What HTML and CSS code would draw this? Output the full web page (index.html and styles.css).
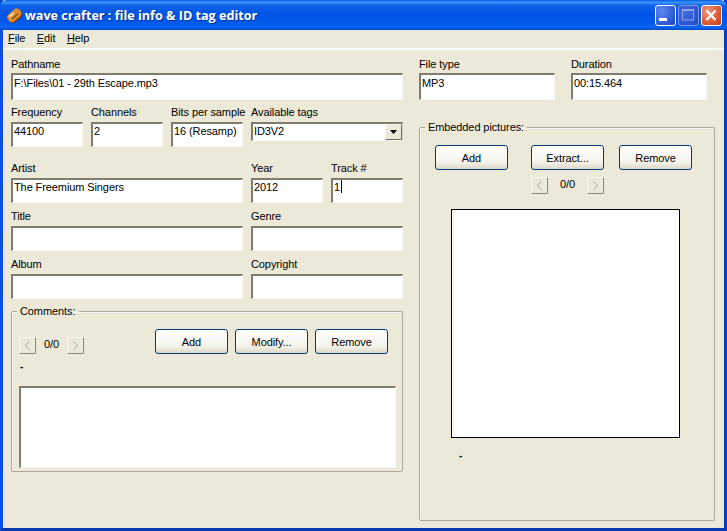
FILE: index.html
```html
<!DOCTYPE html>
<html lang="en">
<head>
<meta charset="utf-8">
<title>wave crafter : file info &amp; ID tag editor</title>
<link rel="stylesheet" href="styles.css">
</head>
<body>
<div class="window">
  <header class="titlebar">
    <svg class="app-icon" width="18" height="18" viewBox="0 0 18 18">
      <g transform="rotate(-42 9 10)">
        <rect x="1.5" y="5.5" width="15" height="9.5" rx="4" fill="#7a3f12"/>
        <rect x="1.5" y="4.5" width="15" height="9" rx="4" fill="#e08a34"/>
        <rect x="4" y="6" width="6" height="2" fill="#ffd9a0"/>
        <rect x="5" y="9.5" width="8" height="1.5" fill="#94501a"/>
      </g>
    </svg>
    <span class="title-text">wave crafter : file info &amp; ID tag editor</span>
    <div class="win-btns">
      <div class="win-btn min"><svg width="21" height="21" viewBox="0 0 21 21"><rect x="4" y="13" width="8" height="3" fill="#fff"/></svg></div>
      <div class="win-btn max"><svg width="21" height="21" viewBox="0 0 21 21"><rect x="4.5" y="5" width="11" height="10" fill="none" stroke="#8fa6e0" stroke-width="1"/><rect x="4" y="4" width="12" height="2" fill="#8fa6e0"/></svg></div>
      <div class="win-btn close"><svg width="21" height="21" viewBox="0 0 21 21"><path d="M5.5 5.5l9 9.5M14.5 5.5l-9 9.5" stroke="#fff" stroke-width="2.2" fill="none"/></svg></div>
    </div>
  </header>
  <nav class="menubar">
    <span class="menu-item"><u>F</u>ile</span>
    <span class="menu-item"><u>E</u>dit</span>
    <span class="menu-item"><u>H</u>elp</span>
  </nav>
  <main class="client">
    <section class="col-left">
      <div class="field f-path"><label class="lbl">Pathname</label><div class="box tall">F:\Files\01 - 29th Escape.mp3</div></div>
      <div class="row r-tech">
        <div class="field w72"><label class="lbl">Frequency</label><div class="box">44100</div></div>
        <div class="field w72"><label class="lbl">Channels</label><div class="box">2</div></div>
        <div class="field w72"><label class="lbl">Bits per sample</label><div class="box">16 (Resamp)</div></div>
        <div class="field w152"><label class="lbl">Available tags</label>
          <div class="box combo"><span>ID3V2</span><span class="combo-btn"><svg width="8" height="5" viewBox="0 0 8 5"><path d="M0 0h7L3.5 4z" fill="#000"/></svg></span></div>
        </div>
      </div>
      <div class="row r-meta">
        <div class="field w232"><label class="lbl">Artist</label><div class="box">The Freemium Singers</div></div>
        <div class="field w72"><label class="lbl">Year</label><div class="box">2012</div></div>
        <div class="field w72"><label class="lbl">Track #</label><div class="box">1<span class="caret"></span></div></div>
      </div>
      <div class="row r-meta">
        <div class="field w232"><label class="lbl">Title</label><div class="box"></div></div>
        <div class="field w152"><label class="lbl">Genre</label><div class="box"></div></div>
      </div>
      <div class="row r-meta">
        <div class="field w232"><label class="lbl">Album</label><div class="box"></div></div>
        <div class="field w152"><label class="lbl">Copyright</label><div class="box"></div></div>
      </div>
      <fieldset class="group comments">
        <legend class="legend">Comments:</legend>
        <div class="comments-top">
          <div class="pager">
            <span class="spin"><svg width="7" height="11" viewBox="0 0 7 11"><path d="M5.5 1L1.5 5.5 5.5 10" fill="none" stroke="#aca899"/></svg></span>
            <span class="count">0/0</span>
            <span class="spin"><svg width="7" height="11" viewBox="0 0 7 11"><path d="M1.5 1L5.5 5.5 1.5 10" fill="none" stroke="#aca899"/></svg></span>
          </div>
          <div class="btns">
            <button class="btn">Add</button>
            <button class="btn">Modify...</button>
            <button class="btn">Remove</button>
          </div>
        </div>
        <div class="dash">-</div>
        <div class="box memo"></div>
      </fieldset>
    </section>
    <section class="col-right">
      <div class="row r-file">
        <div class="field w136"><label class="lbl">File type</label><div class="box tall">MP3</div></div>
        <div class="field w136"><label class="lbl">Duration</label><div class="box tall">00:15.464</div></div>
      </div>
      <fieldset class="group pictures">
        <legend class="legend">Embedded pictures:</legend>
        <div class="pic-btns">
          <button class="btn">Add</button>
          <button class="btn">Extract...</button>
          <button class="btn">Remove</button>
        </div>
        <div class="pager pic-pager">
          <span class="spin"><svg width="7" height="11" viewBox="0 0 7 11"><path d="M5.5 1L1.5 5.5 5.5 10" fill="none" stroke="#aca899"/></svg></span>
          <span class="count">0/0</span>
          <span class="spin"><svg width="7" height="11" viewBox="0 0 7 11"><path d="M1.5 1L5.5 5.5 1.5 10" fill="none" stroke="#aca899"/></svg></span>
        </div>
        <div class="picture"></div>
        <div class="dash pic-dash">-</div>
      </fieldset>
    </section>
  </main>
</div>
</body>
</html>
```
FILE: styles.css
```css
* { box-sizing: border-box; }
html, body { margin: 0; padding: 0; height: 100%; }
body { width: 727px; height: 531px; overflow: hidden; font-family: "Liberation Sans", Arial, sans-serif; font-size: 11px; letter-spacing: -0.1px; color: #000; }
.window { width: 727px; height: 531px; display: flex; flex-direction: column; background: #ece9d8; border-left: 3px solid #0a50dc; border-right: 3px solid #0a3cc0; border-bottom: 3px solid #0a3ab0; }
.titlebar { margin: 0 -3px; height: 30px; flex: none; display: flex; align-items: center; padding: 0 5px 0 6px; border-radius: 7px 7px 0 0;
  background: linear-gradient(180deg, #0a5ae0 0%, #3a93ff 8%, #0f63ea 18%, #0054e3 45%, #0058ea 75%, #0a66f2 90%, #0048c8 100%); }
.app-icon { flex: none; margin-right: 1px; }
.title-text { font-family: "Open Sans", sans-serif; font-weight: 700; font-size: 12.6px; letter-spacing: 0; color: #fff; text-shadow: 1px 1px 0 #0f2f9a; white-space: nowrap; flex: 1; padding-top: 1px; }
.win-btns { display: flex; gap: 2px; }
.win-btn { width: 21px; height: 21px; border: 1px solid #fff; border-radius: 3px; display: block; }
.win-btn svg { display: block; margin: -1px; }
.min { background: radial-gradient(circle at 30% 30%, #5f8bf0, #2a55d6 70%, #1c3fb8); }
.max { background: radial-gradient(circle at 30% 30%, #3f6be0, #2a55d0 70%, #2447bc); border-color: #7d97e0; }
.close { background: radial-gradient(circle at 30% 30%, #ec9a80, #dd5a34 60%, #bf3a1a); }
.menubar { height: 19px; flex: none; display: flex; align-items: center; gap: 11.5px; padding: 0 0 2px 5px; border-bottom: 1px solid #fff; box-shadow: 0 1px 0 #f8f6ee; }
.client { flex: 1; display: flex; padding: 9px 0 7px 8px; gap: 16px; min-height: 0; }
.col-left { width: 392px; flex: none; display: flex; flex-direction: column; }
.col-right { width: 296px; flex: none; display: flex; flex-direction: column; }
.row { display: flex; gap: 8px; }
.field { display: flex; flex-direction: column; }
.f-path { height: 42px; }
.r-tech { margin-top: 6px; height: 41px; }
.r-meta { margin-top: 7px; height: 41px; }
.r-tech + .r-meta { margin-top: 15px; }
.r-file { gap: 16px; height: 42px; }
.w72 { width: 72px; }
.w136 { width: 136px; }
.w152 { width: 152px; }
.w232 { width: 232px; }
.lbl { height: 16px; line-height: 12px; white-space: nowrap; }
.f-path .lbl, .r-file .lbl { height: 15px; }
.box { background: #fff; height: 25px; padding: 0 1px; border-style: solid; border-width: 2px 1px 1px 2px; border-color: #7f7c70 #f7f6ef #f7f6ef #7f7c70; line-height: 14px; white-space: nowrap; }
.tall { height: 27px; padding-top: 1px; }
.combo { height: 19px; display: flex; justify-content: space-between; padding: 0 0 0 1px; line-height: 14px; border-color: #7f7c70 #d8d5c6 #f7f6ef #7f7c70; }
.combo-btn { width: 17px; flex: none; height: 16px; background: #ece9d8; border: 1px solid; border-color: #f7f6ef #6e6c60 #6e6c60 #f7f6ef; display: flex; align-items: center; justify-content: center; }
.caret { display: inline-block; width: 1px; height: 13px; background: #000; vertical-align: top; margin-left: 1px; }
.group { margin: 0; min-width: 0; padding: 0; border: 1px solid #aca899; border-radius: 2px; box-shadow: inset 1px 1px 0 #f7f6ef; }
.legend { padding: 0 3px; margin-left: 5px; line-height: 12px; }
.comments .legend { margin-left: -2px; padding: 0 4px 0 3px; }
.comments { margin-top: 6px; width: 392px; height: 167px; padding: 0 7px; }
.comments-top { display: flex; justify-content: space-between; padding-right: 7px; height: 25px; margin-top: 12px; }
.pager { display: flex; align-items: center; }
.spin { width: 17px; height: 17px; background: #ece9d8; border: 1px solid; border-color: #f7f6ef #8c897c #8c897c #f7f6ef; display: flex; align-items: center; justify-content: center; }
.count { width: 31px; text-align: center; padding-bottom: 3px; }
.comments .pager { margin-top: 8px; align-self: flex-start; }
.btns { display: flex; gap: 7px; }
.btn { width: 73px; height: 25px; padding: 0; font: inherit; letter-spacing: inherit; color: #000; border: 1px solid #003c74; border-radius: 3px; background: linear-gradient(180deg, #fff 0%, #f5f4ec 70%, #dcd8c8 100%); }
.dash { height: 14px; line-height: 14px; margin: 6px 0 12px 1px; font-weight: 700; font-size: 10px; }
.memo { width: 377px; height: 82px; }
.pictures { margin-top: 21px; width: 296px; height: 400px; padding: 0; }
.pic-btns { display: flex; padding-left: 15px; gap: 23px; margin-top: 12px; }
.pic-btns .btn:last-child { margin-left: -8px; }
.pic-pager { margin: 7px 0 0 111px; }
.pic-pager .count { width: 39px; }
.picture { width: 229px; height: 229px; margin: 15px 0 0 31px; background: #fff; border: 1px solid #000; }
.pic-dash { margin: 11px 0 0 39px; }
```
